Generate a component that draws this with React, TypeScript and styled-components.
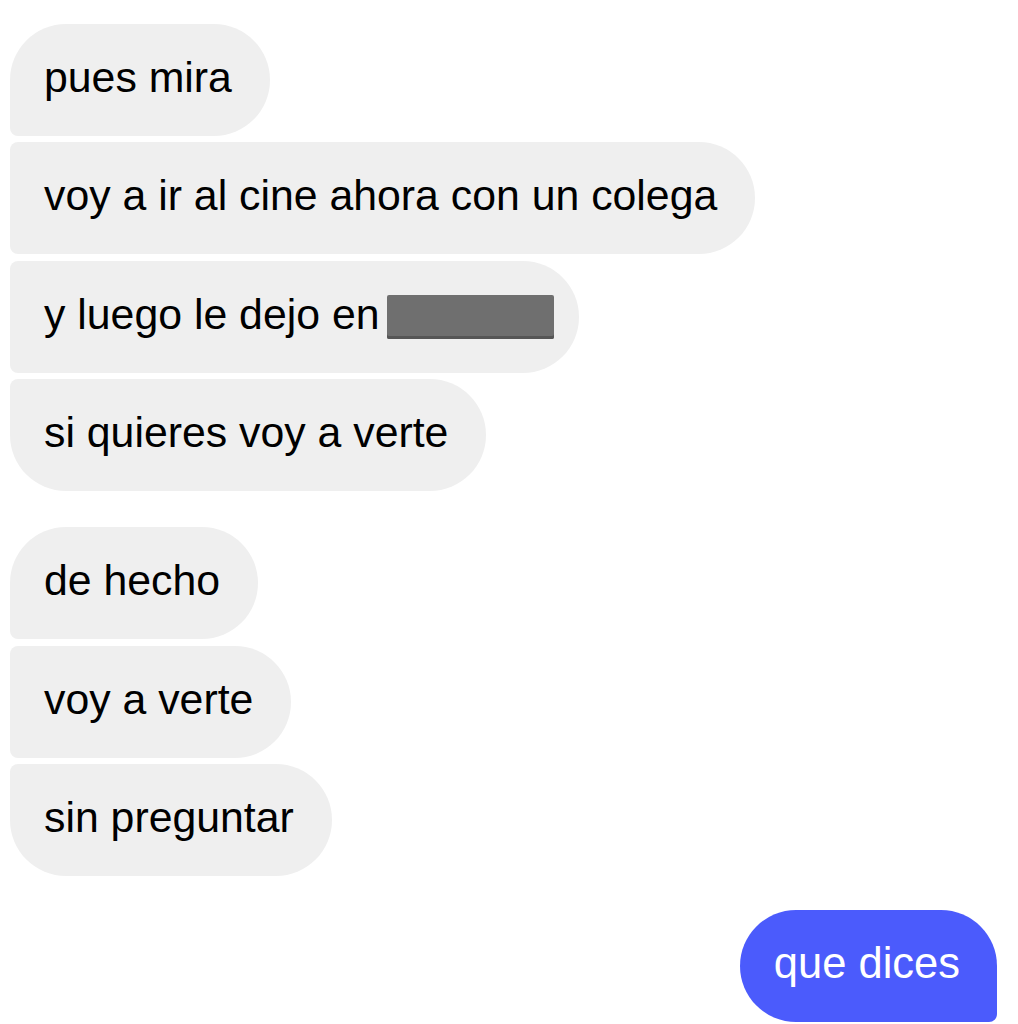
import React from "react";
import styled, { createGlobalStyle, css } from "styled-components";

const Global = createGlobalStyle`
  html, body { margin: 0; padding: 0; background: #ffffff; }
  body { font-family: "Liberation Sans", Arial, sans-serif; }
`;

const Thread = styled.div`
  display: flex;
  flex-direction: column;
  padding: 24px 21px 0 10px;
  width: 1018px;
  box-sizing: border-box;
`;

const Group = styled.div<{ $mine?: boolean }>`
  display: flex;
  flex-direction: column;
  align-items: ${(p) => (p.$mine ? "flex-end" : "flex-start")};
  gap: 6.4px;
  margin-top: ${(p) => (p.$mine ? "34px" : "36px")};
  &:first-child { margin-top: 0; }
`;

type Pos = "first" | "middle" | "last" | "single";

const Bubble = styled.div<{ $pos: Pos; $mine?: boolean }>`
  box-sizing: border-box;
  height: 112px;
  display: flex;
  align-items: center;
  padding: 0 38px 5px 34px;
  font-size: 42.8px;
  white-space: nowrap;
  ${(p) =>
    p.$mine
      ? css`
          background: #4b5bfc;
          color: #ffffff;
          padding: 0 37px 4px 34px;
          font-size: 43.5px;
          border-radius: 56px 56px 8px 56px;
        `
      : css`
          background: #efefef;
          color: #000000;
          border-radius: ${p.$pos === "first"
            ? "56px 56px 56px 8px"
            : p.$pos === "last"
            ? "8px 56px 56px 56px"
            : "8px 56px 56px 8px"};
        `}
`;

const Redacted = styled.span`
  display: inline-block;
  flex: none;
  width: 167px;
  height: 44px;
  margin-left: 7px;
  margin-right: -13px;
  margin-top: 5px;
  background: #6f6f6f;
  border-radius: 2px;
  box-shadow: inset 0 -3px 0 #565656;
`;

export default function App() {
  return (
    <>
      <Global />
      <Thread>
        <Group>
          <Bubble $pos="first">pues mira</Bubble>
          <Bubble $pos="middle">voy a ir al cine ahora con un colega</Bubble>
          <Bubble $pos="middle">
            y luego le dejo en<Redacted />
          </Bubble>
          <Bubble $pos="last">si quieres voy a verte</Bubble>
        </Group>
        <Group>
          <Bubble $pos="first">de hecho</Bubble>
          <Bubble $pos="middle">voy a verte</Bubble>
          <Bubble $pos="last">sin preguntar</Bubble>
        </Group>
        <Group $mine>
          <Bubble $pos="single" $mine>
            que dices
          </Bubble>
        </Group>
      </Thread>
    </>
  );
}
